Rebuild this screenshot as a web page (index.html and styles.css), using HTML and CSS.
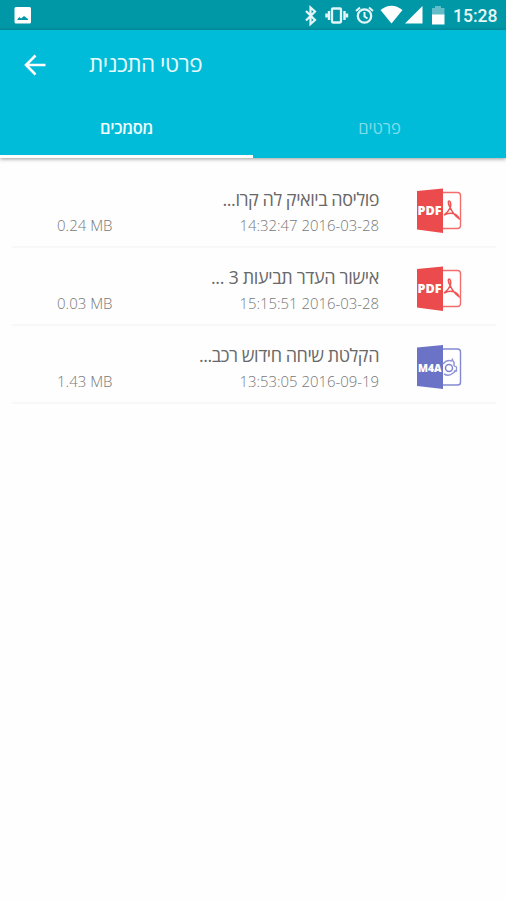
FILE: index.html
```html
<!DOCTYPE html>
<html lang="he">
<head>
<meta charset="utf-8">
<title>פרטי התכנית</title>
<link rel="stylesheet" href="styles.css">
</head>
<body>
<div class="status">
  <svg class="photo" width="18" height="18" viewBox="0 0 18 18"><rect x=".5" y="1" width="16.500" height="16.500" rx="1.500" fill="#fff"/><path d="M3.500 14v-1l2-2 1.500 1.500 3-2.500 4 3v1Z" fill="#0097a7"/></svg>
  <svg class="indicators" width="150" height="30" viewBox="300 0 150 30" fill="none" stroke="#e4f5f7">
    <path d="M306 11l9 9-4.500 4V7.500l4.500 4-9 9" stroke-width="2.200"/>
    <rect x="332" y="8.500" width="9" height="14" rx="1" stroke-width="2.300"/>
    <path d="M329 11v9M344.500 11v9M326.500 13.500v4M347 13.500v4" stroke-width="2.400"/>
    <circle cx="364.500" cy="16" r="6.700" stroke-width="2.300"/>
    <path d="M364.500 12v4.500l3 2M356 11l4-3.500M373 11l-4-3.500" stroke-width="2"/>
    <path d="M380.500 10Q391.500 1.500 402.500 10L391.500 23.500Z" fill="#fff" stroke="none"/>
    <path d="M422.500 6V23.500H405Z" fill="#fff" stroke="none"/>
    <path d="M432 8h3V6h6v2h3.500v7h-12.500Z" fill="#63bdc8" stroke="none"/>
    <path d="M432 14.500h12.500v10H432Z" fill="#fff" stroke="none"/>
  </svg>
  <span class="clock">15:28</span>
</div>
<header class="appbar">
  <div class="toolbar">
    <svg width="24" height="24" viewBox="0 0 24 24" fill="none" stroke="#fff" stroke-width="2.600"><path d="M12.500 2.500L3 12l9.500 9.500M3 12h19.500"/></svg>
    <h1>פרטי התכנית</h1>
  </div>
  <nav class="tabs">
    <div class="tab active"><span>מסמכים</span></div>
    <div class="tab"><span>פרטים</span></div>
  </nav>
</header>
<main class="list">
  <section class="row">
    <div class="size">0.24 MB</div>
    <div class="info"><div class="name" dir="rtl">פוליסה ביואיק לה קרו...</div><div class="date">14:32:47 2016-03-28</div></div>
    <svg class="icon" width="46" height="46" viewBox="0 0 46 46">
      <path d="M26 4.500H41.500Q44.500 4.500 44.500 7.500V37.500Q44.500 40.500 41.500 40.500H26" fill="#fff" stroke="#f26d6b" stroke-width="1.400"/>
      <path d="M1 3L27 .5V45L1 41.500Z" fill="#eb4b4d"/>
      <path d="M28 27C34 23 36 17 34 13.500C32 12 31.500 15 34 19C36 24 39 28 43 30.500C41 25.500 34 23.500 28 27Z" fill="none" stroke="#ee5557" stroke-width="1.500"/>
      <text x="1.500" y="26.500" class="badge" textLength="24" lengthAdjust="spacingAndGlyphs">PDF</text>
    </svg>
  </section>
  <section class="row">
    <div class="size">0.03 MB</div>
    <div class="info"><div class="name wide" dir="rtl">אישור העדר תביעות 3 ...</div><div class="date">15:15:51 2016-03-28</div></div>
    <svg class="icon" width="46" height="46" viewBox="0 0 46 46">
      <path d="M26 4.500H41.500Q44.500 4.500 44.500 7.500V37.500Q44.500 40.500 41.500 40.500H26" fill="#fff" stroke="#f26d6b" stroke-width="1.400"/>
      <path d="M1 3L27 .5V45L1 41.500Z" fill="#eb4b4d"/>
      <path d="M28 27C34 23 36 17 34 13.500C32 12 31.500 15 34 19C36 24 39 28 43 30.500C41 25.500 34 23.500 28 27Z" fill="none" stroke="#ee5557" stroke-width="1.500"/>
      <text x="1.500" y="26.500" class="badge" textLength="24" lengthAdjust="spacingAndGlyphs">PDF</text>
    </svg>
  </section>
  <section class="row">
    <div class="size">1.43 MB</div>
    <div class="info"><div class="name" dir="rtl">הקלטת שיחה חידוש רכב...</div><div class="date">13:53:05 2016-09-19</div></div>
    <svg class="icon" width="46" height="46" viewBox="0 0 46 46">
      <path d="M26 5H41.500Q44.500 5 44.500 8V38.500Q44.500 41 41.500 41H26" fill="#fff" stroke="#8289d2" stroke-width="1.400"/>
      <path d="M1 3.500L27 1V45L1 42Z" fill="#6b73c6"/>
      <path d="M36 17A8 8 0 0 0 27 20M28 30A8 8 0 0 0 39.500 26M36 14.500l1.500 3.500M38 17.500V22" fill="none" stroke="#8f95d6" stroke-width="1.500"/>
      <circle cx="33" cy="24" r="3.500" fill="none" stroke="#7f86d0" stroke-width="1.500"/>
      <path d="M38 22l2.500 1v4l-2.500 1" fill="none" stroke="#8f95d6" stroke-width="1.300"/>
      <text x="2" y="28" class="badge small" textLength="23.500" lengthAdjust="spacingAndGlyphs">M4A</text>
    </svg>
  </section>
</main>
</body>
</html>
```
FILE: styles.css
```css
* { box-sizing: border-box; }
body { margin: 0; height: 900px; overflow: hidden; background: #fefefe; font-family: "Open Sans", "Noto Sans", sans-serif; }
.status { height: 30px; background: #0097a7; display: flex; align-items: center; padding: 0 9px 0 14px; }
.indicators { margin-left: auto; }
.clock { color: #e8f7f8; font: 500 17.500px/30px Roboto, sans-serif; width: 44px; margin-left: 3px; padding-top: 1px; white-space: nowrap; }
.appbar { position: relative; height: 128px; background: #00bcd9; box-shadow: 0 1px 4px rgba(0,0,0,.4); }
.toolbar { height: 70px; display: flex; align-items: center; padding-left: 23px; }
h1 { margin: 0 0 0 42px; padding-bottom: 3px; font-size: 22.500px; line-height: 34px; font-weight: 500; letter-spacing: -.5px; color: #e9fafc; white-space: nowrap; }
.tabs { display: flex; height: 58px; }
.tab { flex: 1; display: flex; justify-content: center; padding-top: 17px; font-size: 16.500px; line-height: 22px; color: #81dcea; }
.active { color: #f1fcfd; font-weight: 600; letter-spacing: -.3px; border-bottom: 3px solid #fff; }
.list { padding: 12px 10px 0 12px; }
.row { height: 78px; display: flex; border-bottom: 2px solid #f8f8f8; padding: 18px 34px 0 45px; color: #787878; }
.size { width: 70px; padding-top: 26px; font-size: 15px; line-height: 22px; font-weight: 350; }
.info { flex: 1; text-align: right; margin-right: 37px; }
.name { font-size: 18px; line-height: 24px; height: 26px; letter-spacing: -.45px; color: #686868; white-space: nowrap; margin-top: -1px; margin-bottom: 1px; }
.wide { letter-spacing: -.35px; }
.date { font-size: 14.900px; line-height: 22px; font-weight: 350; }
.badge { fill: #fff; font: 800 12px "Open Sans", sans-serif; }
.small { font-size: 11px; }
```
